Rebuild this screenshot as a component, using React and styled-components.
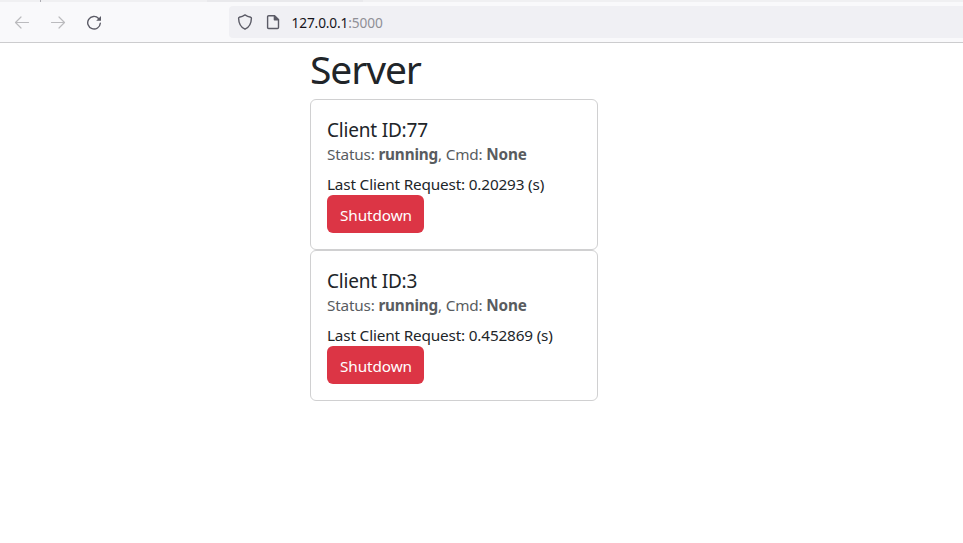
import React from "react";
import styled, { createGlobalStyle } from "styled-components";

const GlobalStyle = createGlobalStyle`
  *, *::before, *::after { box-sizing: border-box; }
  body {
    margin: 0;
    background: #fff;
    color: #212529;
    font: 400 15.3px/24px "Noto Sans", "Open Sans", sans-serif;
    overflow: hidden;
  }
`;

const TabStrip = styled.div`
  display: flex;
  height: 2px;
  background: #f0f0f2;
  padding-left: 40px;
`;

const TabDivider = styled.div`
  width: 1px;
  height: 2px;
  background: #adadb3;
`;

const ActiveTabShadow = styled.div`
  width: 156px;
  height: 2px;
  margin-left: 166px;
  background: #e9e9ec;
`;

const Toolbar = styled.header`
  display: flex;
  align-items: center;
  height: 41px;
  padding-left: 14px;
  background: #f9f9fb;
  border-bottom: 1px solid #ccccce;
`;

const NavButtons = styled.nav`
  display: flex;
  gap: 20px;
  width: 215px;
`;

const Icon = styled.svg`
  display: block;
  flex: none;
  width: 16px;
  height: 16px;
  fill: none;
  stroke: ${(p) => (p.$dim ? "#bbbbbe" : "#5b5b66")};
  stroke-width: ${(p) => (p.$dim ? 1.2 : 1.4)};
  stroke-linecap: round;
  stroke-linejoin: round;
`;

const AddressBar = styled.div`
  display: flex;
  align-items: center;
  flex: 1;
  height: 32px;
  padding-left: 8px;
  gap: 12px;
  background: #f0f0f4;
  border-radius: 4px 0 0 4px;
`;

const Url = styled.span`
  font-size: 13.7px;
  line-height: 20px;
  letter-spacing: -0.13px;
  color: #15141a;
  margin: 1px 0 0 -1.5px;
`;

const Port = styled.span`
  color: #8f8f96;
`;

const Page = styled.main`
  width: 288px;
  margin-left: 310px;
`;

const Heading = styled.h1`
  margin: 0 0 8px;
  font-size: 39px;
  font-weight: 400;
  line-height: 52px;
  height: 48px;
  letter-spacing: -1.1px;
`;

const Card = styled.section`
  height: 151px;
  padding: 16px;
  border: 1px solid #d0d0d1;
  border-radius: 6px;
`;

const CardTitle = styled.h5`
  margin: 0 0 4px;
  font-size: 19px;
  font-weight: 400;
  line-height: 29px;
  height: 24px;
  letter-spacing: -0.2px;
`;

const CardSubtitle = styled.h6`
  margin: 0 0 8px;
  font-size: 15.3px;
  font-weight: 400;
  line-height: 20px;
  height: 19px;
  letter-spacing: -0.18px;
  color: #595c5f;
  white-space: nowrap;
`;

const CardText = styled.p`
  margin: 0;
  height: 24px;
  line-height: 27px;
  letter-spacing: -0.16px;
  white-space: nowrap;
`;

const DangerButton = styled.button`
  display: block;
  width: 97px;
  height: 38px;
  padding: 2px 0 0 1px;
  border: 0;
  border-radius: 6px;
  background: #dc3545;
  color: #fff;
  font: inherit;
  letter-spacing: -0.1px;
`;

const clients = [
  { id: 77, status: "running", cmd: "None", last: "0.20293" },
  { id: 3, status: "running", cmd: "None", last: "0.452869" },
];

function ClientCard({ client }) {
  return (
    <Card>
      <CardTitle>Client ID:{client.id}</CardTitle>
      <CardSubtitle>
        Status: <b>{client.status}</b>, Cmd: <b>{client.cmd}</b>
      </CardSubtitle>
      <CardText>Last Client Request: {client.last} (s)</CardText>
      <DangerButton>Shutdown</DangerButton>
    </Card>
  );
}

export default function App() {
  return (
    <>
      <GlobalStyle />
      <TabStrip>
        <TabDivider />
        <ActiveTabShadow />
      </TabStrip>
      <Toolbar>
        <NavButtons>
          <Icon $dim viewBox="0 0 16 16">
            <path d="M14.5 8.5H1.5M7 3L1.5 8.5L7 14" />
          </Icon>
          <Icon $dim viewBox="0 0 16 16">
            <path d="M1.5 8.5H14.5M9 3L14.5 8.5L9 14" />
          </Icon>
          <Icon viewBox="0 0 16 16">
            <path d="M12.6 4.4A6.3 6.3 0 1 0 14.3 9.2" />
            <path d="M15 2V6.8H10.2Z" fill="#5b5b66" stroke="none" />
          </Icon>
        </NavButtons>
        <AddressBar>
          <Icon viewBox="0 0 16 16">
            <path d="M8 .9Q10.5 2.6 13.8 3.3Q14.4 3.5 14.4 4.2C14.3 9.2 12.7 13 8 15.2C3.3 13 1.7 9.2 1.6 4.2Q1.6 3.5 2.2 3.3Q5.5 2.6 8 .9Z" />
          </Icon>
          <Icon viewBox="0 0 16 16">
            <path d="M3.7 1.7H9.4L13.5 5.8V13.4Q13.5 14.5 12.4 14.5H3.7Q2.6 14.5 2.6 13.4V2.8Q2.6 1.7 3.7 1.7Z" />
            <path d="M9.4 1.7V5.8H13.5Z" fill="#5b5b66" />
          </Icon>
          <Url>
            127.0.0.1<Port>:5000</Port>
          </Url>
        </AddressBar>
      </Toolbar>
      <Page>
        <Heading>Server</Heading>
        {clients.map((c) => (
          <ClientCard key={c.id} client={c} />
        ))}
      </Page>
    </>
  );
}
